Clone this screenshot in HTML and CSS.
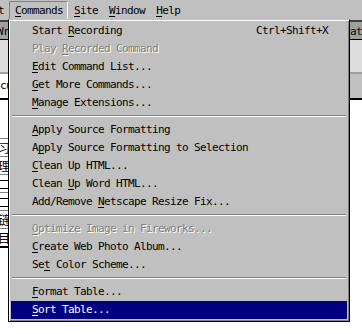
FILE: index.html
```html
<!DOCTYPE html>
<html>
<head>
	<title>Commands Menu</title>
	<link rel="stylesheet" href="styles.css">
</head>
<body>
	<div class="menubar">
		<div class="menubar-item first">Text</div>
		<div class="menubar-item open"><u>C</u>ommands</div>
		<div class="menubar-item"><u>S</u>ite</div>
		<div class="menubar-item"><u>W</u>indow</div>
		<div class="menubar-item"><u>H</u>elp</div>
	</div>
	<div class="titlebar">
		<span class="titlebar-left">Wr</span>
		<span class="titlebar-right">eat</span>
	</div>
	<div class="panel"></div>
	<div class="strip">
		<div class="strip-cell">cu</div>
	</div>
	<div class="doc">
		<div class="doc-table">
			<div class="doc-row">习</div>
			<div class="doc-row">理</div>
			<div class="doc-row">二</div>
			<div class="doc-row">二</div>
			<div class="doc-row">链</div>
			<div class="doc-row">目</div>
		</div>
	</div>
	<div class="menu">
		<div class="menu-item"><span>Start <u>R</u>ecording</span><span>Ctrl+Shift+X</span></div>
		<div class="menu-item disabled"><span>Play <u>R</u>ecorded Command</span></div>
		<div class="menu-item"><span><u>E</u>dit Command List...</span></div>
		<div class="menu-item"><span><u>G</u>et More Commands...</span></div>
		<div class="menu-item"><span><u>M</u>anage Extensions...</span></div>
		<div class="menu-sep"></div>
		<div class="menu-item"><span><u>A</u>pply Source Formatting</span></div>
		<div class="menu-item"><span>A<u>p</u>ply Source Formatting to Selection</span></div>
		<div class="menu-item"><span><u>C</u>lean Up HTML...</span></div>
		<div class="menu-item"><span>Clean <u>U</u>p Word HTML...</span></div>
		<div class="menu-item"><span>Add/Remove <u>N</u>etscape Resize Fix...</span></div>
		<div class="menu-sep"></div>
		<div class="menu-item disabled"><span><u>O</u>ptimize Image in Fireworks...</span></div>
		<div class="menu-item"><span><u>C</u>reate Web Photo Album...</span></div>
		<div class="menu-item"><span>Se<u>t</u> Color Scheme...</span></div>
		<div class="menu-sep"></div>
		<div class="menu-item"><span><u>F</u>ormat Table...</span></div>
		<div class="menu-item active"><span><u>S</u>ort Table...</span></div>
	</div>
</body>
</html>
```

FILE: styles.css
```css
body {
	background-color: #fff;
	color: #000;
	font-family: "DejaVu Sans Mono", monospace;
	font-size: 11px;
	letter-spacing: -0.62px;
	margin: 0;
	overflow: hidden;
	white-space: nowrap;
}
u {
	text-underline-offset: 2px;
}
.menubar {
	background-color: #c0c0c0;
	box-sizing: border-box;
	display: flex;
	height: 20px;
	padding-top: 1px;
}
.menubar-item {
	border: 1px solid transparent;
	line-height: 16px;
	padding: 1px 4px 0 5px;
}
.menubar-item.first {
	margin-left: -26px;
}
.menubar-item.open {
	border-color: #808080 #fff #fff #808080;
}
.titlebar {
	background-color: #a0a0a0;
	border-top: 2px solid #404040;
	border-bottom: 1px solid #000;
	box-sizing: border-box;
	display: flex;
	height: 20px;
	justify-content: space-between;
	line-height: 14px;
	padding-top: 3px;
}
.titlebar-left {
	margin-left: -3px;
}
.titlebar-right {
	width: 18px;
}
.panel {
	background-color: #dcdcdc;
	border-bottom: 2px solid #a0a0a0;
	height: 32px;
}
.strip {
	background-color: #c0c0c0;
	border-bottom: 2px solid #000;
	height: 24px;
}
.strip-cell {
	background-color: #fff;
	height: 24px;
	line-height: 24px;
	width: 20px;
}
.doc {
	padding-top: 38px;
}
.doc-table {
	border-bottom: 2px solid #000;
	width: 20px;
}
.doc-row {
	border-top: 1px solid #808080;
	font-family: "Noto Sans CJK SC", sans-serif;
	font-size: 12px;
	height: 17px;
	letter-spacing: 0;
	line-height: 17px;
	margin-left: -2px;
}
.menu {
	background-color: #c0c0c0;
	border: 1px solid #000;
	border-top-color: #c0c0c0;
	box-shadow: inset 1px 1px 0 #fff, inset -1px -1px 0 #808080;
	left: 8px;
	padding: 2px;
	position: absolute;
	top: 19px;
	width: 336px;
}
.menu-item {
	display: flex;
	height: 18px;
	justify-content: space-between;
	line-height: 18px;
	padding: 0 19px 0 21px;
}
.menu-item.disabled {
	color: #808080;
	text-shadow: 1px 1px 0 #fff;
}
.menu-item.active {
	background-color: #000080;
	color: #fff;
}
.menu-sep {
	border-top: 1px solid #808080;
	border-bottom: 1px solid #fff;
	margin: 3px 1px 4px;
}
```
